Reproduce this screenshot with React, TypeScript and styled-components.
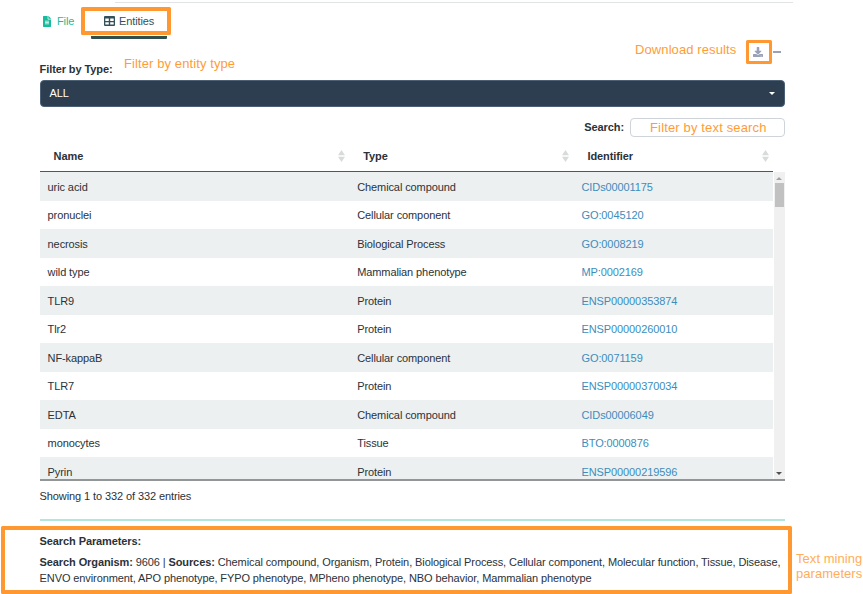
import React from "react";
import styled, { createGlobalStyle } from "styled-components";
import { FaFileAlt, FaDownload } from "react-icons/fa";

const GlobalStyle = createGlobalStyle`
  * { box-sizing: border-box; }
  html, body { margin: 0; padding: 0; background: #fff; overflow: hidden; }
`;

const Page = styled.div`
  position: relative;
  width: 863px;
  height: 594px;
  overflow: hidden;
  padding: 2px 78px 0 39.6px;
  background: #fff;
  color: #2b3238;
  font: 11px/15px "Liberation Sans", Arial, sans-serif;
  letter-spacing: -0.1px;
`;

const TopRule = styled.div`
  height: 1px;
  margin: 0 -8px 0 75px;
  background: #e2e4e4;
`;

const Tabs = styled.nav`
  display: flex;
  height: 36px;
`;

const Tab = styled.a<{ $active?: boolean }>`
  display: flex;
  align-items: center;
  width: ${(p) => (p.$active ? "76px" : "51px")};
  padding: 3px 0 0 ${(p) => (p.$active ? "13.4px" : "3.4px")};
  gap: ${(p) => (p.$active ? "4px" : "6px")};
  color: ${(p) => (p.$active ? "#34505a" : "#18bc9c")};
  border-bottom: 3px solid ${(p) => (p.$active ? "#2f4f4f" : "transparent")};
  border-radius: 1px;
`;

const FileIcon = styled(FaFileAlt)`
  width: 8px;
  height: 11px;
`;

const PanelTools = styled.div`
  display: flex;
  justify-content: flex-end;
  align-items: center;
  height: 24px;
  margin-top: 1px;
  padding-right: 4px;
  gap: 10px;
  color: #98a1b8;
`;

const Dash = styled.span`
  width: 8px;
  height: 2px;
  background: #98a1b8;
`;

const FieldLabel = styled.label`
  display: block;
  font-weight: 700;
`;

const TypeField = styled.div`
  display: flex;
  flex-direction: column;
  margin-top: -2px;
  gap: 3px;
`;

const Select = styled.div`
  display: flex;
  align-items: center;
  justify-content: space-between;
  height: 27px;
  padding: 0 9px;
  border: 1px solid #4b6074;
  border-radius: 4px;
  background: #2c3e50;
  color: #fff;
`;

const Caret = styled.span`
  border: 3px solid transparent;
  border-top-color: #fff;
  border-bottom: 0;
`;

const SearchRow = styled.div`
  display: flex;
  justify-content: flex-end;
  align-items: center;
  gap: 6px;
  margin-top: 11px;
  height: 19px;
`;

const SearchInput = styled.div`
  width: 155px;
  height: 19px;
  border: 1px solid #ced4da;
  border-radius: 4px;
`;

const columns = "309.6px 224.3px 199.5px";

const HeadRow = styled.div`
  display: grid;
  grid-template-columns: ${columns};
  width: 733.4px;
  height: 35px;
  border-bottom: 1px solid #53575a;
  font-weight: 700;
`;

const HeadCell = styled.div`
  display: flex;
  align-items: center;
  justify-content: space-between;
  padding: 4px 4px 0 14px;
`;

const TableBody = styled.div`
  display: flex;
  height: 309px;
  overflow: hidden;
  border-bottom: 2px solid #939697;
`;

const Rows = styled.div`
  width: 733.4px;
`;

const Row = styled.div`
  display: grid;
  grid-template-columns: ${columns};
  align-items: center;
  height: 28.5px;
  padding-top: 1.5px;
  &:nth-child(odd) { background: #ecf0f1; }
`;

const Cell = styled.div`
  padding-left: 8px;
  white-space: nowrap;
`;

const Identifier = styled(Cell)`
  color: #3c8dbc;
`;

const Scrollbar = styled.div`
  display: flex;
  flex-direction: column;
  justify-content: space-between;
  align-items: center;
  width: 11px;
  margin-left: 1px;
  padding: 5px 0 4px;
  background: #f0f0f0;
`;

const Thumb = styled.div`
  width: 9px;
  height: 24px;
  margin: 3px 0 auto;
  background: #c1c1c1;
`;

const ScrollUp = styled.span`
  border: 3px solid transparent;
  border-top: 0;
  border-bottom-color: #a3a3a3;
`;

const ScrollDown = styled(Caret)`
  border-top-color: #505050;
`;

const Info = styled.div`
  margin-top: 8px;
`;

const TealRule = styled.div`
  height: 2px;
  margin-top: 15px;
  background: #b1e6dc;
`;

const Parameters = styled.section`
  margin-top: 13px;
  white-space: nowrap;
`;

const ParameterText = styled.p`
  margin: 6px 0 0;
  line-height: 15.5px;
`;

const Frame = styled.div<{ $x: number; $y: number; $w: number; $h: number; $line: number }>`
  position: absolute;
  left: ${(p) => p.$x}px;
  top: ${(p) => p.$y}px;
  width: ${(p) => p.$w}px;
  height: ${(p) => p.$h}px;
  border: ${(p) => p.$line}px solid #ff9830;
  border-radius: 1.5px;
`;

const Note = styled.div<{ $x: number; $y: number; $spacing?: number; $soft?: boolean }>`
  position: absolute;
  left: ${(p) => p.$x}px;
  top: ${(p) => p.$y}px;
  font-size: 13px;
  line-height: 15px;
  letter-spacing: ${(p) => p.$spacing ?? 0.1}px;
  color: ${(p) => (p.$soft ? "#ffad5c" : "#ff9c38")};
  white-space: pre;
`;

const entities = [
  ["uric acid", "Chemical compound", "CIDs00001175"],
  ["pronuclei", "Cellular component", "GO:0045120"],
  ["necrosis", "Biological Process", "GO:0008219"],
  ["wild type", "Mammalian phenotype", "MP:0002169"],
  ["TLR9", "Protein", "ENSP00000353874"],
  ["Tlr2", "Protein", "ENSP00000260010"],
  ["NF-kappaB", "Cellular component", "GO:0071159"],
  ["TLR7", "Protein", "ENSP00000370034"],
  ["EDTA", "Chemical compound", "CIDs00006049"],
  ["monocytes", "Tissue", "BTO:0000876"],
  ["Pyrin", "Protein", "ENSP00000219596"],
];

const SortIcon = () => (
  <svg width="7" height="12" viewBox="0 0 7 12" fill="#d8dadb">
    <path d="M3.5 0 7 5.3H0ZM0 6.7h7L3.5 12Z" />
  </svg>
);

const TableIcon = () => (
  <svg width="11" height="10" viewBox="0 0 11 10" fill="currentColor" fillRule="evenodd">
    <path d="M1 0h9a1 1 0 0 1 1 1v8a1 1 0 0 1-1 1H1a1 1 0 0 1-1-1V1a1 1 0 0 1 1-1ZM1.3 2.6v2.4h3.5V2.6ZM6.2 2.6v2.4h3.5V2.6ZM1.3 6.2v2.4h3.5V6.2ZM6.2 6.2v2.4h3.5V6.2Z" />
  </svg>
);

export default function App() {
  return (
    <Page>
      <GlobalStyle />
      <TopRule />
      <Tabs>
        <Tab><FileIcon preserveAspectRatio="none" />File</Tab>
        <Tab $active><TableIcon />Entities</Tab>
      </Tabs>
      <PanelTools>
        <FaDownload size={10} />
        <Dash />
      </PanelTools>
      <TypeField>
        <FieldLabel>Filter by Type:</FieldLabel>
        <Select>ALL<Caret /></Select>
      </TypeField>
      <SearchRow>
        <FieldLabel>Search:</FieldLabel>
        <SearchInput />
      </SearchRow>
      <HeadRow>
        {["Name", "Type", "Identifier"].map((title) => (
          <HeadCell key={title}>{title}<SortIcon /></HeadCell>
        ))}
      </HeadRow>
      <TableBody>
        <Rows>
          {entities.map(([name, type, id]) => (
            <Row key={name}>
              <Cell>{name}</Cell>
              <Cell>{type}</Cell>
              <Identifier>{id}</Identifier>
            </Row>
          ))}
        </Rows>
        <Scrollbar><ScrollUp /><Thumb /><ScrollDown /></Scrollbar>
      </TableBody>
      <Info>Showing 1 to 332 of 332 entries</Info>
      <TealRule />
      <Parameters>
        <b>Search Parameters:</b>
        <ParameterText>
          <b>Search Organism:</b> 9606 | <b>Sources:</b> Chemical compound, Organism, Protein, Biological Process, Cellular component, Molecular function, Tissue, Disease,
          <br />
          ENVO environment, APO phenotype, FYPO phenotype, MPheno phenotype, NBO behavior, Mammalian phenotype
        </ParameterText>
      </Parameters>
      <Frame $x={81} $y={7} $w={90} $h={28} $line={4} />
      <Frame $x={746} $y={40} $w={26} $h={24} $line={3} />
      <Frame $x={1} $y={526} $w={791} $h={68} $line={4} />
      <Note $x={124} $y={56}>Filter by entity type</Note>
      <Note $x={635} $y={42}>Download results</Note>
      <Note $x={650} $y={120} $spacing={0.15}>Filter by text search</Note>
      <Note $x={796} $y={551} $spacing={0.05} $soft>{"Text mining\nparameters"}</Note>
    </Page>
  );
}
